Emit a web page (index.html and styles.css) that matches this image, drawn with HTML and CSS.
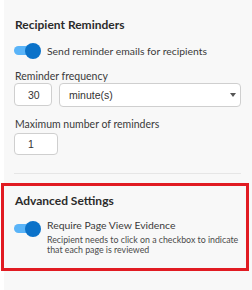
FILE: index.html
```html
<!DOCTYPE html>
<html lang="en">
<head>
  <meta charset="UTF-8">
  <meta name="viewport" content="width=device-width, initial-scale=1.0">
  <title>Reminders</title>
  <link rel="stylesheet" href="styles.css">
</head>
<body>
  <div class="panel">
    <h2 class="title">Recipient Reminders</h2>
    <div class="switch-row">
      <span class="toggle on"></span>
      <span class="switch-text">Send reminder emails for recipients</span>
    </div>

    <label class="field-label">Reminder frequency</label>
    <div class="freq">
      <input class="num" type="text" value="30">
      <div class="select">minute(s)<span class="caret"></span></div>
    </div>

    <label class="field-label">Maximum number of reminders</label>
    <input class="num small" type="text" value="1">

    <hr class="divider">

    <div class="advanced">
      <h2 class="title">Advanced Settings</h2>
      <div class="switch-row top">
        <span class="toggle on"></span>
        <div>
          <div class="switch-text">Require Page View Evidence</div>
          <div class="hint">Recipient needs to click on a checkbox to indicate that each page is reviewed</div>
        </div>
      </div>
      <div class="highlight"></div>
    </div>
  </div>
</body>
</html>
```

FILE: styles.css
```css
body { margin: 0; background: #fff; font-family: Lato, "Open Sans", sans-serif; color: #333; }
.panel { margin-left: 4px; min-height: 290px; background: #f8f8f8; padding: 16px 11px 0 10px; box-sizing: border-box; }
.title { font-size: 12px; font-weight: bold; color: #2b2b2b; margin: 0 0 0 1px; line-height: 17px; }

.switch-row { display: flex; align-items: center; gap: 6px; margin-top: 10px; }
.switch-row.top { align-items: flex-start; margin-top: 12px; }
.switch-text { font-size: 10.4px; color: #3a3a3a; line-height: 13px; }
.switch-row.top .switch-text { margin-top: -2px; }
.hint { font-size: 8.8px; color: #4a4a4a; line-height: 10px; margin-top: 3px; }

.toggle { position: relative; flex: none; width: 27px; height: 16px; }
.toggle::before { content: ""; position: absolute; left: 0; top: 3px; width: 24px; height: 9px; border-radius: 5px; background: #5ab4f8; }
.toggle::after { content: ""; position: absolute; right: 0; top: 0; width: 16px; height: 16px; border-radius: 50%; background: #0b72c9; }

.field-label { display: block; font-size: 10.5px; color: #3a3a3a; margin: 11px 0 0 1px; line-height: 13px; }

.freq { display: flex; gap: 7px; }
.num { width: 38px; height: 23px; box-sizing: border-box; border: 1px solid #cfcfcf; border-radius: 4px; background: #fff; font-family: "Liberation Sans", Arial, sans-serif; font-size: 10.5px; color: #333; padding: 0 0 0 13px; margin: 0; }
.num.small { width: 44px; height: 22px; display: block; margin-top: 2px; }
.select { flex: 1; height: 24px; box-sizing: border-box; border: 1px solid #cfcfcf; border-radius: 4px; background: #fff; font-family: "Liberation Sans", Arial, sans-serif; font-size: 10.5px; color: #333; padding-left: 9px; display: flex; align-items: center; justify-content: space-between; padding-right: 4px; }
.caret { width: 0; height: 0; border-left: 3px solid transparent; border-right: 3px solid transparent; border-top: 4px solid #555; }

.divider { border: 0; border-top: 1px solid #e6e6e6; margin: 18px 0 0 0; }

.advanced { position: relative; padding-top: 18px; padding-bottom: 16px; }
.highlight { position: absolute; left: -13px; right: -8px; top: 9px; bottom: 0; border: 3px solid #e11b22; pointer-events: none; }
```
